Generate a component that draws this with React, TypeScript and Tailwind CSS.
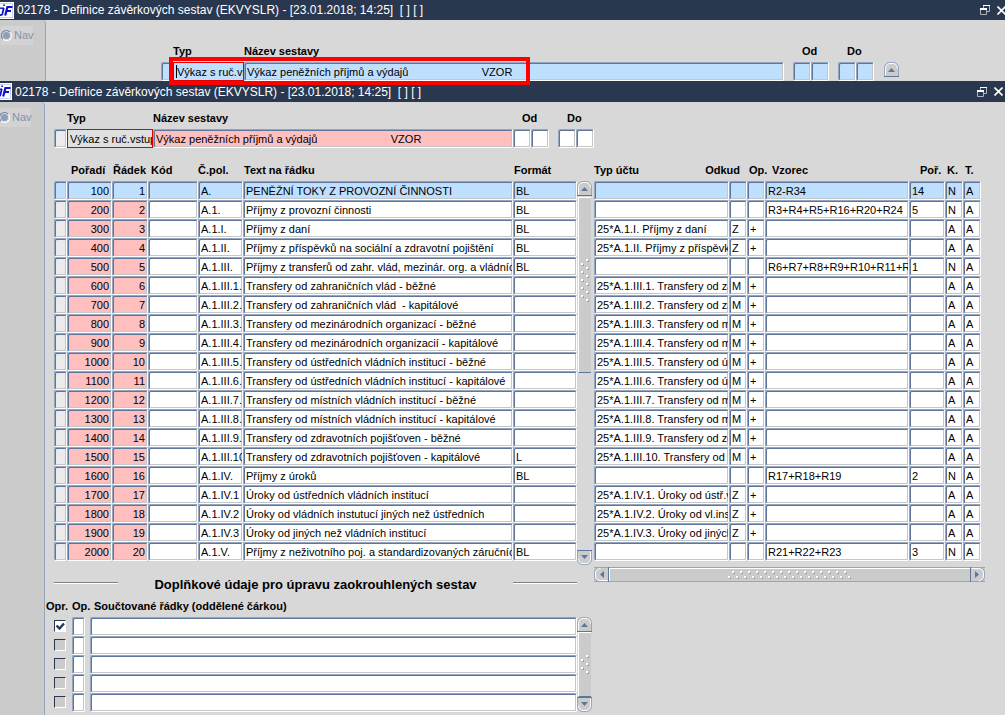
import React from 'react';
import clsx from 'clsx';

type Row = {
  order: string;
  line: string;
  item: string;
  text: string;
  format?: string;
  account?: string;
  source?: string;
  op?: string;
  formula?: string;
  seq?: string;
  k: string;
};

const rows: Row[] = [
  { order: '100', line: '1', item: 'A.', text: 'PENĚŽNÍ TOKY Z PROVOZNÍ ČINNOSTI', format: 'BL', formula: 'R2-R34', seq: '14', k: 'N' },
  { order: '200', line: '2', item: 'A.1.', text: 'Příjmy z provozní činnosti', format: 'BL', formula: 'R3+R4+R5+R16+R20+R24', seq: '5', k: 'N' },
  { order: '300', line: '3', item: 'A.1.I.', text: 'Příjmy z daní', format: 'BL', account: '25*A.1.I. Příjmy z daní', source: 'Z', op: '+', k: 'A' },
  { order: '400', line: '4', item: 'A.1.II.', text: 'Příjmy z příspěvků na sociální a zdravotní pojištění', format: 'BL', account: '25*A.1.II. Příjmy z příspěvků', source: 'Z', op: '+', k: 'A' },
  { order: '500', line: '5', item: 'A.1.III.', text: 'Příjmy z transferů od zahr. vlád, mezinár. org. a vládních', format: 'BL', formula: 'R6+R7+R8+R9+R10+R11+R12', seq: '1', k: 'N' },
  { order: '600', line: '6', item: 'A.1.III.1.', text: 'Transfery od zahraničních vlád - běžné', account: '25*A.1.III.1. Transfery od zahr.', source: 'M', op: '+', k: 'A' },
  { order: '700', line: '7', item: 'A.1.III.2.', text: 'Transfery od zahraničních vlád  - kapitálové', account: '25*A.1.III.2. Transfery od zahr.', source: 'M', op: '+', k: 'A' },
  { order: '800', line: '8', item: 'A.1.III.3.', text: 'Transfery od mezinárodních organizací - běžné', account: '25*A.1.III.3. Transfery od mezinár.', source: 'M', op: '+', k: 'A' },
  { order: '900', line: '9', item: 'A.1.III.4.', text: 'Transfery od mezinárodních organizacií - kapitálové', account: '25*A.1.III.4. Transfery od mezinár.', source: 'M', op: '+', k: 'A' },
  { order: '1000', line: '10', item: 'A.1.III.5.', text: 'Transfery od ústředních vládních institucí - běžné', account: '25*A.1.III.5. Transfery od ústř.', source: 'M', op: '+', k: 'A' },
  { order: '1100', line: '11', item: 'A.1.III.6.', text: 'Transfery od ústředních vládních institucí - kapitálové', account: '25*A.1.III.6. Transfery od ústř.', source: 'M', op: '+', k: 'A' },
  { order: '1200', line: '12', item: 'A.1.III.7.', text: 'Transfery od místních vládních institucí - běžné', account: '25*A.1.III.7. Transfery od místních', source: 'M', op: '+', k: 'A' },
  { order: '1300', line: '13', item: 'A.1.III.8.', text: 'Transfery od místních vládních institucí - kapitálové', account: '25*A.1.III.8. Transfery od místních', source: 'M', op: '+', k: 'A' },
  { order: '1400', line: '14', item: 'A.1.III.9.', text: 'Transfery od zdravotních pojišťoven - běžné', account: '25*A.1.III.9. Transfery od zdrav.', source: 'M', op: '+', k: 'A' },
  { order: '1500', line: '15', item: 'A.1.III.10.', text: 'Transfery od zdravotních pojišťoven - kapitálové', format: 'L', account: '25*A.1.III.10. Transfery od zdrav.', source: 'M', op: '+', k: 'A' },
  { order: '1600', line: '16', item: 'A.1.IV.', text: 'Příjmy z úroků', format: 'BL', formula: 'R17+R18+R19', seq: '2', k: 'N' },
  { order: '1700', line: '17', item: 'A.1.IV.1', text: 'Úroky od ústředních vládních institucí', account: '25*A.1.IV.1. Úroky od ústř.vl.', source: 'Z', op: '+', k: 'A' },
  { order: '1800', line: '18', item: 'A.1.IV.2', text: 'Úroky od vládních instutucí jiných než ústředních', account: '25*A.1.IV.2. Úroky od vl.inst.', source: 'Z', op: '+', k: 'A' },
  { order: '1900', line: '19', item: 'A.1.IV.3', text: 'Úroky od jiných než vládních institucí', account: '25*A.1.IV.3. Úroky od jiných', source: 'Z', op: '+', k: 'A' },
  { order: '2000', line: '20', item: 'A.1.V.', text: 'Příjmy z neživotního poj. a standardizovaných záručních', format: 'BL', formula: 'R21+R22+R23', seq: '3', k: 'N' },
];

type Tone = 'white' | 'blue' | 'pink' | 'gray';
const tones: Record<Tone, string> = {
  white: 'bg-white',
  blue: 'bg-[#bfdfff]',
  pink: 'bg-[#ffbfbf]',
  gray: 'bg-[#ebebeb]',
};

function Field({ label, value = '', tone = 'white', right, id, className }: {
  label?: string; value?: string; tone?: Tone; right?: boolean; id?: string; className?: string;
}) {
  return (
    <input
      id={id}
      aria-label={label}
      defaultValue={value}
      className={clsx(
        'block h-[19px] w-full min-w-0 rounded-[2px] border border-t-[#93a5bf] border-l-[#93a5bf] border-r-white border-b-white pl-0.5 text-[11px] text-black shadow-[inset_1px_1px_#5f769c,inset_-1px_-1px_#c6c6c6] outline-none',
        tones[tone],
        right ? 'pr-0.5 text-right' : 'pr-0',
        className,
      )}
    />
  );
}

function Arrow({ dir }: { dir: 'up' | 'down' | 'left' | 'right' }) {
  const turn = { up: 0, right: 90, down: 180, left: 270 }[dir];
  return (
    <svg viewBox="0 0 15 15" className="block size-[15px]" aria-hidden="true">
      <g transform={`rotate(${turn} 7.5 7.5)`}>
        <path d="M.5 14.5V6C.5 2.5 3 .5 5.5 .5h4c2.500 0 5 2 5 5.500v8.500z" fill="#cbcbcb" stroke="#93a5bf" />
        <path d="M1.500 13.500V6.500C1.500 3.500 3.500 1.500 6 1.500h3c2.500 0 4.500 2 4.500 5" fill="none" stroke="#fff" />
        <path d="M0 14.500h15" stroke="#5f769c" />
        <path d="M4 10h7L7.500 6z" fill="#5f769c" />
      </g>
    </svg>
  );
}

function Grip({ count, horizontal }: { count: number; horizontal?: boolean }) {
  const dots = Array.from({ length: count }, (_, i) => {
    const along = i * 4 + 1;
    const across = i % 2 === (horizontal ? 1 : 0) ? (horizontal ? 1 : 6) : (horizontal ? 6 : 1);
    return horizontal ? [along, across] : [across, along];
  });
  const len = count * 4;
  return (
    <svg width={horizontal ? len : 9} height={horizontal ? 9 : len} className="shrink-0" aria-hidden="true">
      {dots.map(([x, y]) => (
        <g key={`${x}-${y}`}>
          <rect x={x} y={y} width="2" height="2" fill="#93a5bf" />
          <rect x={x - 1} y={y - 1} width="2" height="2" fill="#fff" />
        </g>
      ))}
    </svg>
  );
}

function VerticalBar({ className, thumb, dots }: { className?: string; thumb: string; dots: number }) {
  return (
    <div className={clsx('flex w-[15px] shrink-0 flex-col', className)}>
      <button type="button" aria-label="Nahoru"><Arrow dir="up" /></button>
      <div className="flex-1 px-px">
        <div className={clsx('flex justify-center border-t border-b border-l border-t-white border-b-[#5f769c] border-l-white bg-[#cbcbcb]', thumb)}>
          <Grip count={dots} />
        </div>
      </div>
      <button type="button" aria-label="Dolů"><Arrow dir="down" /></button>
    </div>
  );
}

function Logo() {
  return (
    <svg viewBox="0 0 14 17" className="h-[17px] w-3.5 shrink-0" aria-hidden="true">
      <path d="M0 0h14v17H0z" fill="#fff" />
      <path d="M0 1.500h12.500v14H0" fill="none" stroke="#c9cdf5" />
      <path d="M0 6.200h4" stroke="#1010c8" strokeWidth="1.400" />
      <path d="M3.800 6 2.300 12q-.4 1.300-2.300 1M4.300 2.500l-.3 1.400" fill="none" stroke="#1010c8" strokeWidth="1.800" />
      <path d="M5.200 13.500 7.400 5H12.500M6.500 9h4.500" fill="none" stroke="#1010c8" strokeWidth="2.200" />
    </svg>
  );
}

function TitleBar({ back }: { back?: boolean }) {
  return (
    <header className={clsx('flex items-center bg-[#2a384f] text-white', back ? 'h-5' : 'h-[21px] pr-0.5')}>
      <div className={clsx('flex', !back && '-ml-0.5')}><Logo /></div>
      <h1 className="ml-[3px] min-w-0 flex-1 truncate text-[12px] leading-4 whitespace-pre">
        02178 - Definice závěrkových sestav (EKVYSLR) - [23.01.2018; 14:25]  [ ] [ ]
      </h1>
      <button type="button" aria-label="Obnovit" className="mr-[7px]">
        <svg viewBox="0 0 10 10" className="block size-2.5" fill="none">
          <path d="M3.500 3V.5h6v6H7" stroke="#aeb4bd" />
          <path d="M3 .5h7" stroke="#fff" />
          <path d="M.5 3.500h6v6h-6z" stroke="#aeb4bd" />
          <path d="M0 4h7" stroke="#fff" strokeWidth="2" />
        </svg>
      </button>
      <button type="button" aria-label="Zavřít" className={clsx(back && '-mr-px')}>
        <svg viewBox="0 0 9 9" className="block size-[9px]">
          <path d="m.5.5 8 8m0-8-8 8" stroke="#fff" strokeWidth="1.600" />
        </svg>
      </button>
    </header>
  );
}

function NavPane({ back }: { back?: boolean }) {
  return (
    <nav className={clsx('shrink-0 rounded-tr-sm border-r border-[#93a5bf] bg-[#cbcbcb] pt-1.5', back ? 'w-[46px]' : 'w-[45px]')}>
      <label className={clsx('flex h-[19px] w-8 items-center gap-0.5 bg-[#d3d3d3] text-[11px] text-[#7f93ad]', back ? 'ml-px' : '-ml-px')}>
        <input
          type="radio"
          disabled
          className="size-[11px] shrink-0 appearance-none rounded-full border border-t-[#73879f] border-r-white border-b-white border-l-[#73879f] bg-[#8ea0b8] shadow-[inset_0_0_0_1px_#dcdcdc]"
        />
        Nav
      </label>
    </nav>
  );
}

const labelStyle = 'mb-1 block h-3.5 text-[11px] leading-3.5 font-bold whitespace-nowrap';

function PairField({ id, label, tone }: { id: string; label: string; tone?: Tone }) {
  return (
    <div className="w-9 shrink-0">
      <label htmlFor={id} className={clsx(labelStyle, 'pl-[9px]')}>{label}</label>
      <div className="flex">
        <Field id={id} tone={tone} />
        <Field label={`${label} (2)`} tone={tone} />
      </div>
    </div>
  );
}

const reportName = 'Výkaz peněžních příjmů a výdajů' + ' '.repeat(24) + 'VZOR';
const typeStyle = 'block h-[19px] w-full border border-[#e00000] text-[11px] text-black outline-none';

function BackWindow() {
  return (
    <section className="flex flex-col">
      <TitleBar back />
      <div className="flex">
        <NavPane back />
        <form className="flex min-w-0 flex-1 items-end pt-6 pr-[106px] pl-[115px]">
          <div className="w-3 shrink-0"><Field label="Výběr" tone="blue" /></div>
          <div className="relative flex min-w-0 flex-1">
            <div className="w-[71px] shrink-0">
              <label htmlFor="back-type" className={labelStyle}>Typ</label>
              <input id="back-type" defaultValue="Výkaz s ruč.vstupem" className={clsx(typeStyle, 'bg-[#bfdfff] pl-[3px]')} />
            </div>
            <div className="min-w-0 flex-1">
              <label htmlFor="back-name" className={labelStyle}>Název sestavy</label>
              <Field id="back-name" value={reportName} tone="blue" />
            </div>
            <div className="absolute bottom-[3px] left-[3px] h-[13px] w-px bg-black" />
            <div className="pointer-events-none absolute -bottom-1 -left-1 z-10 h-7 w-[361px] border-4 border-[#ff0000]" />
          </div>
          <div className="ml-[9px] flex gap-[9px]">
            <PairField id="back-from" label="Od" tone="blue" />
            <PairField id="back-to" label="Do" tone="blue" />
          </div>
          <div className="ml-2.5 h-[19px] w-[15px] shrink-0">
            <button type="button" aria-label="Nahoru" className="block"><Arrow dir="up" /></button>
          </div>
        </form>
      </div>
    </section>
  );
}

const th = 'h-[19px] p-0 pb-1 text-left align-middle text-[11px] leading-3.5 font-bold whitespace-nowrap';

function LinesTable() {
  return (
    <table className="w-full min-w-0 table-fixed border-collapse">
      <colgroup>
        <col className="w-[13px]" />
        <col className="w-[45px]" />
        <col className="w-9" />
        <col className="w-[50px]" />
        <col className="w-[45px]" />
        <col />
        <col className="w-16" />
      </colgroup>
      <thead>
        <tr>
          <th className={th} />
          <th className={clsx(th, 'pl-1')}>Pořadí</th>
          <th className={clsx(th, 'pl-px')}>Řádek</th>
          <th className={clsx(th, 'pl-[3px]')}>Kód</th>
          <th className={th}>Č.pol.</th>
          <th className={clsx(th, 'pl-px')}>Text na řádku</th>
          <th className={clsx(th, 'pl-px')}>Formát</th>
        </tr>
      </thead>
      <tbody>
        {rows.map((r, i) => {
          const plain: Tone = i === 0 ? 'blue' : 'white';
          const key: Tone = i === 0 ? 'blue' : 'pink';
          return (
            <tr key={r.order}>
              <td className="p-0"><Field label="Výběr" tone={i === 0 ? 'blue' : 'gray'} /></td>
              <td className="p-0"><Field label="Pořadí" value={r.order} tone={key} right /></td>
              <td className="p-0"><Field label="Řádek" value={r.line} tone={key} right /></td>
              <td className="p-0"><Field label="Kód" tone={plain} /></td>
              <td className="p-0"><Field label="Č.pol." value={r.item} tone={plain} /></td>
              <td className="p-0"><Field label="Text na řádku" value={r.text} tone={plain} /></td>
              <td className="p-0"><Field label="Formát" value={r.format} tone={plain} /></td>
            </tr>
          );
        })}
      </tbody>
    </table>
  );
}

function FormulaTable() {
  return (
    <table className="w-full table-fixed border-collapse">
      <colgroup>
        <col className="w-[135px]" />
        <col className="w-[18px]" />
        <col className="w-[18px]" />
        <col />
        <col className="w-9" />
        <col className="w-[18px]" />
        <col className="w-[18px]" />
      </colgroup>
      <thead>
        <tr>
          <th className={th}>Typ účtu</th>
          <th className={th}><div className="flex justify-end pr-[7px]"><span className="shrink-0">Odkud</span></div></th>
          <th className={clsx(th, 'pl-0.5')}>Op.</th>
          <th className={clsx(th, 'pl-[7px]')}>Vzorec</th>
          <th className={clsx(th, 'pl-[11px]')}>Poř.</th>
          <th className={clsx(th, 'pl-0.5')}>K.</th>
          <th className={clsx(th, 'pl-0.5')}>T.</th>
        </tr>
      </thead>
      <tbody>
        {rows.map((r, i) => {
          const tone: Tone = i === 0 ? 'blue' : 'white';
          return (
            <tr key={r.order}>
              <td className="p-0"><Field label="Typ účtu" value={r.account} tone={tone} /></td>
              <td className="p-0"><Field label="Odkud" value={r.source} tone={tone} /></td>
              <td className="p-0"><Field label="Op." value={r.op} tone={tone} /></td>
              <td className="p-0"><Field label="Vzorec" value={r.formula} tone={tone} /></td>
              <td className="p-0"><Field label="Poř." value={r.seq} tone={tone} /></td>
              <td className="p-0"><Field label="K." value={r.k} tone={tone} /></td>
              <td className="p-0"><Field label="T." value="A" tone={tone} /></td>
            </tr>
          );
        })}
      </tbody>
    </table>
  );
}

function RoundingSection() {
  return (
    <section>
      <div className="mt-3.5 flex h-5 items-center justify-between pr-[15px]">
        <div className="mb-1 h-0.5 w-16 border-t border-b border-t-[#808080] border-b-white" />
        <h2 className="text-[13px] leading-5 font-bold whitespace-nowrap">Doplňkové údaje pro úpravu zaokrouhlených sestav</h2>
        <div className="mb-1 h-0.5 w-16 border-t border-b border-t-[#808080] border-b-white" />
      </div>
      <div className="-ml-2 flex">
        <table className="w-full min-w-0 table-fixed border-collapse">
          <colgroup>
            <col className="w-[26px]" />
            <col className="w-[18px]" />
            <col />
          </colgroup>
          <thead>
            <tr>
              <th className="h-[22px] p-0 text-left text-[11px] font-bold">Opr.</th>
              <th className="h-[22px] p-0 text-left text-[11px] font-bold whitespace-nowrap">Op.</th>
              <th className="h-[22px] p-0 pl-1 text-left text-[11px] font-bold">Součtované řádky (oddělené čárkou)</th>
            </tr>
          </thead>
          <tbody>
            {[0, 1, 2, 3, 4].map((n) => (
              <tr key={n}>
                <td className="h-[19px] p-0 pb-0.5 pl-2">
                  <div className="relative size-3">
                    <input
                      type="checkbox"
                      aria-label="Opr."
                      defaultChecked={n === 0}
                      className="peer block size-3 appearance-none border border-t-[#2a384f] border-r-white border-b-white border-l-[#2a384f] bg-[#cbcbcb] checked:bg-white"
                    />
                    <svg viewBox="0 0 12 12" className="pointer-events-none absolute inset-0 hidden size-3 peer-checked:block">
                      <path d="m2.500 5.500 3 3L10 3.500" fill="none" stroke="#2a384f" strokeWidth="2.400" />
                    </svg>
                  </div>
                </td>
                <td className="p-0"><Field label="Op." className="max-w-[13px]" /></td>
                <td className="p-0"><Field label="Součtované řádky" /></td>
              </tr>
            ))}
          </tbody>
        </table>
        <VerticalBar className="mt-[22px]" thumb="h-full items-center" dots={5} />
      </div>
    </section>
  );
}

function FrontWindow() {
  return (
    <section className="flex flex-1 flex-col">
      <TitleBar />
      <div className="flex flex-1">
        <NavPane />
        <main className="min-w-0 flex-1 pt-[9px] pr-5 pl-[9px]">
          <form className="flex items-end pr-[391px]">
            <div className="w-[13px] shrink-0"><Field label="Výběr" tone="gray" /></div>
            <div className="w-[86px] shrink-0">
              <label htmlFor="type" className={labelStyle}>Typ</label>
              <input id="type" defaultValue="Výkaz s ruč.vstupem" className={clsx(typeStyle, 'bg-[#e0e0e0] pl-0.5')} />
            </div>
            <div className="min-w-0 flex-1">
              <label htmlFor="name" className={labelStyle}>Název sestavy</label>
              <Field id="name" value={reportName} tone="pink" />
            </div>
            <div className="flex gap-[9px]">
              <PairField id="from" label="Od" />
              <PairField id="to" label="Do" />
            </div>
          </form>
          <div className="mt-3.5 grid grid-cols-[538fr_391fr] gap-x-0.5">
            <div className="min-w-0">
              <div className="flex">
                <LinesTable />
                <VerticalBar className="mt-[19px] -mb-1" thumb="mt-px h-[176px] pt-[61px]" dots={11} />
              </div>
              <RoundingSection />
            </div>
            <div className="min-w-0">
              <div className="pr-1"><FormulaTable /></div>
              <div className="mt-1.5 flex h-[15px] border-t border-b border-[#93a5bf] bg-[#cbcbcb]">
                <button type="button" aria-label="Vlevo" className="-my-px"><Arrow dir="left" /></button>
                <div className="flex flex-1 items-center justify-center border-t border-l border-white">
                  <Grip count={31} horizontal />
                </div>
                <button type="button" aria-label="Vpravo" className="-my-px"><Arrow dir="right" /></button>
              </div>
            </div>
          </div>
        </main>
      </div>
    </section>
  );
}

export default function App() {
  return (
    <div className="flex min-h-screen flex-col overflow-x-hidden bg-[#d8d8d8] font-['Liberation_Sans',Arial,sans-serif] text-black">
      <BackWindow />
      <FrontWindow />
    </div>
  );
}
